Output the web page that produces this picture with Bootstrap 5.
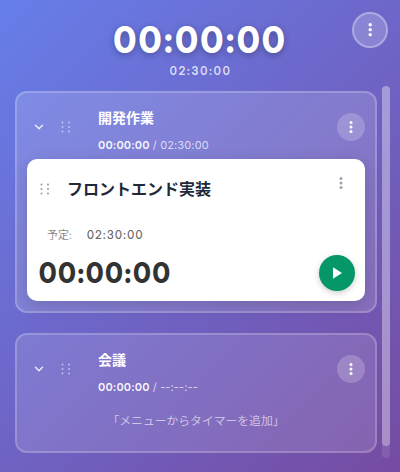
<!DOCTYPE html>
<html lang="ja">
<head>
<meta charset="utf-8">
<meta name="viewport" content="width=device-width, initial-scale=1">
<title>Timer</title>
<link rel="stylesheet" href="https://cdn.jsdelivr.net/npm/bootstrap@5.3.0/dist/css/bootstrap.min.css">
<style>
html,body{height:100%}
body{font-family:Inter,"Noto Sans CJK JP",sans-serif;background:linear-gradient(135deg,#667eea 0%,#764ba2 100%);color:#fff;line-height:1}
svg{display:block}
.app{height:472px}
.digits{font-family:"Inter Display",Inter,"Noto Sans CJK JP",sans-serif;font-feature-settings:"calt" 0}
.digits span{display:inline-block;transform:scaleX(.92)}
.top{height:86px;padding-top:18px}
.total{font-size:37px;line-height:44px;font-weight:800;letter-spacing:2.8px;padding-left:1px;text-shadow:0 2px 8px rgba(0,0,0,.3)}
.total-plan{font-size:12px;line-height:16px;font-weight:600;letter-spacing:2.1px;color:rgba(255,255,255,.8);padding:1px 0 0 1px}
.round{border-radius:50%;padding:0;border:0;color:#fff;display:flex;align-items:center;justify-content:center;flex:none}
.main-menu{width:36px;height:36px;top:12px;right:12px;background:rgba(255,255,255,.2);border:2px solid rgba(255,255,255,.3)}
.scroller{height:372px}
.groups{width:362px;margin:5px 0 0 15px;gap:20px}
.group-box{border:2px solid rgba(255,255,255,.2);border-radius:12px;background:rgba(255,255,255,.15)}
.g1{height:222px}
.g2{height:120px;background:rgba(255,255,255,.12)}
.group-head{height:66px;padding:2px 10px 0 16px}
.chev{width:12px}
.grip{margin-left:16px}
.names{margin-left:27px;padding-top:14px}
.gname{font-size:14px;line-height:17px;font-weight:700}
.gtime{font-size:11px;line-height:14px;margin-top:12px;letter-spacing:.13px;color:rgba(255,255,255,.72)}
.gtime b{font-weight:600;color:rgba(255,255,255,.95)}
.gbtn{width:28px;height:28px;background:rgba(255,255,255,.2)}
.task{width:338px;height:142px;margin-left:10px;border-radius:10px;background:#fff;box-shadow:0 4px 16px rgba(0,0,0,.15);color:#1f2937;padding:18px 10px 10px 13px}
.tname{font-size:16px;line-height:24px;font-weight:600;margin-left:17px}
.tdots{margin:-12px 12px 0 0}
.plan{margin:24px 0 0 7px;height:20px;line-height:20px;color:#888;font-size:11px}
.plan .val{font-size:12px;font-weight:500;letter-spacing:1.5px;color:#666;margin-left:16px}
.elapsed{font-size:28.5px;line-height:36px;font-weight:800;color:#333;letter-spacing:2px;margin-left:-1px}
.elapsed span,.plan .val{transform-origin:left}
.play{width:36px;height:36px;background:#059669;box-shadow:0 2px 6px rgba(0,0,0,.2)}
.hint{font-size:11.8px;line-height:18px;color:rgba(255,255,255,.6);margin-top:11px}
.track{width:8px;height:372px;margin-left:5px;border-radius:4px;background:rgba(255,255,255,.1)}
.thumb{height:360px;border-radius:4px;background:rgba(255,255,255,.3)}
</style>
</head>
<body class="overflow-hidden">
<svg class="d-none">
<symbol id="dots" viewBox="0 0 4 14"><circle cx="2" cy="2.5" r="1.5"/><circle cx="2" cy="7" r="1.5"/><circle cx="2" cy="11.5" r="1.5"/></symbol>
<symbol id="grip" viewBox="0 0 10 12"><circle cx="1.5" cy="1.5" r="1"/><circle cx="8" cy="1.5" r="1"/><circle cx="1.5" cy="6" r="1"/><circle cx="8" cy="6" r="1"/><circle cx="1.5" cy="10.5" r="1"/><circle cx="8" cy="10.5" r="1"/></symbol>
<symbol id="chev" viewBox="0 0 12 12"><path d="M2.5 4.2 6 7.7 9.5 4.2" fill="none" stroke="currentColor" stroke-opacity=".85" stroke-width="1.5" stroke-linecap="round" stroke-linejoin="round"/></symbol>
</svg>
<div class="app position-relative">
 <header class="top text-center">
  <div class="total digits"><span>00:00:00</span></div>
  <div class="total-plan digits"><span>02:30:00</span></div>
  <button class="round main-menu position-absolute" aria-label="メニュー"><svg width="4.4" height="15.4" fill="currentColor"><use href="#dots"/></svg></button>
 </header>
 <main class="scroller d-flex">
  <div class="groups d-flex flex-column flex-shrink-0">
   <section class="group-box g1 flex-shrink-0">
    <div class="group-head d-flex align-items-start">
     <div class="d-flex align-items-center h-100"><svg class="chev" width="12" height="12"><use href="#chev"/></svg>
     <svg class="grip" width="10" height="12" fill="#fff" opacity=".5"><use href="#grip"/></svg></div>
     <div class="names flex-grow-1"><div class="gname">開発作業</div><div class="gtime"><b>00:00:00</b> / 02:30:00</div></div>
     <div class="d-flex align-items-center h-100"><button class="round gbtn" aria-label="メニュー"><svg width="4" height="14" fill="currentColor"><use href="#dots"/></svg></button></div>
    </div>
    <article class="task d-flex flex-column">
     <div class="d-flex align-items-center">
      <svg width="10" height="12" fill="#999"><use href="#grip"/></svg>
      <div class="tname flex-grow-1">フロントエンド実装</div>
      <svg class="tdots" width="4" height="14" fill="#9ca3af"><use href="#dots"/></svg>
     </div>
     <div class="plan digits d-flex"><b class="fw-normal">予定:</b><span class="val">02:30:00</span></div>
     <div class="d-flex justify-content-between align-items-center mt-auto"><div class="elapsed digits"><span>00:00:00</span></div>
     <button class="round play" aria-label="開始"><svg width="12" height="12" viewBox="0 0 12 12"><path d="M2 .3v11.4L11 6z" fill="#fff"/></svg></button></div>
    </article>
   </section>
   <section class="group-box g2 flex-shrink-0">
    <div class="group-head d-flex align-items-start">
     <div class="d-flex align-items-center h-100"><svg class="chev" width="12" height="12"><use href="#chev"/></svg>
     <svg class="grip" width="10" height="12" fill="#fff" opacity=".5"><use href="#grip"/></svg></div>
     <div class="names flex-grow-1"><div class="gname">会議</div><div class="gtime"><b>00:00:00</b> / --:--:--</div></div>
     <div class="d-flex align-items-center h-100"><button class="round gbtn" aria-label="メニュー"><svg width="4" height="14" fill="currentColor"><use href="#dots"/></svg></button></div>
    </div>
    <div class="hint text-center">「メニューからタイマーを追加」</div>
   </section>
  </div>
  <div class="track"><div class="thumb"></div></div>
 </main>
</div>
<script src="https://cdn.jsdelivr.net/npm/bootstrap@5.3.0/dist/js/bootstrap.bundle.min.js"></script>
</body>
</html>
